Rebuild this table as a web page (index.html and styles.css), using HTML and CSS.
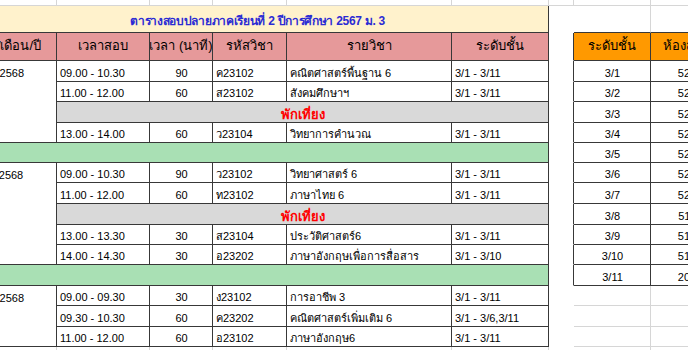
FILE: index.html
```html
<!DOCTYPE html>
<html lang="th">
<head>
<meta charset="utf-8">
<title>ตารางสอบปลายภาค</title>
<link rel="stylesheet" href="styles.css">
</head>
<body>
<div class="sheet">
  <!-- top strip -->
  <div class="c"></div><div class="c"></div><div class="c"></div><div class="c"></div><div class="c"></div><div class="c"></div><div class="c"></div><div class="c"></div><div class="c"></div>

  <!-- title -->
  <div class="c k title span6">ตารางสอบปลายภาคเรียนที่ 2 ปีการศึกษา 2567 ม. 3</div>
  <div class="c w"></div>
  <div class="c tt"></div>
  <div class="c tt"></div>

  <!-- header -->
  <div class="c k hd pink">วัน/เดือน/ปี</div>
  <div class="c k hd pink">เวลาสอบ</div>
  <div class="c k hd pink">เวลา (นาที)</div>
  <div class="c k hd pink">รหัสวิชา</div>
  <div class="c k hd pink">รายวิชา</div>
  <div class="c k hd pink">ระดับชั้น</div>
  <div class="c gl"></div>
  <div class="c k hd orange">ระดับชั้น</div>
  <div class="c k hd orange">ห้องสอบ</div>

  <!-- day 1 -->
  <div class="c k date r4"><span class="dt">10/03/2568</span></div>
  <div class="c k">09.00 - 10.30</div><div class="c k ctr">90</div><div class="c k">ค23102</div><div class="c k">คณิตศาสตร์พื้นฐาน 6</div><div class="c k">3/1 - 3/11</div>
  <div class="c gl"></div><div class="c k ctr">3/1</div><div class="c k ctr">521</div>

  <div class="c k">11.00 - 12.00</div><div class="c k ctr">60</div><div class="c k">ส23102</div><div class="c k">สังคมศึกษาฯ</div><div class="c k">3/1 - 3/11</div>
  <div class="c gl"></div><div class="c k ctr">3/2</div><div class="c k ctr">522</div>

  <div class="c k lunch span5">พักเที่ยง</div>
  <div class="c gl"></div><div class="c k ctr">3/3</div><div class="c k ctr">523</div>

  <div class="c k">13.00 - 14.00</div><div class="c k ctr">60</div><div class="c k">ว23104</div><div class="c k">วิทยาการคำนวณ</div><div class="c k">3/1 - 3/11</div>
  <div class="c gl"></div><div class="c k ctr">3/4</div><div class="c k ctr">524</div>

  <div class="c k green span6"></div>
  <div class="c gl"></div><div class="c k ctr">3/5</div><div class="c k ctr">525</div>

  <!-- day 2 -->
  <div class="c k date r5"><span class="dt">11/03/2568</span></div>
  <div class="c k">09.00 - 10.30</div><div class="c k ctr">90</div><div class="c k">ว23102</div><div class="c k">วิทยาศาสตร์ 6</div><div class="c k">3/1 - 3/11</div>
  <div class="c gl"></div><div class="c k ctr">3/6</div><div class="c k ctr">526</div>

  <div class="c k">11.00 - 12.00</div><div class="c k ctr">60</div><div class="c k">ท23102</div><div class="c k">ภาษาไทย 6</div><div class="c k">3/1 - 3/11</div>
  <div class="c gl"></div><div class="c k ctr">3/7</div><div class="c k ctr">527</div>

  <div class="c k lunch span5">พักเที่ยง</div>
  <div class="c gl"></div><div class="c k ctr">3/8</div><div class="c k ctr">511</div>

  <div class="c k">13.00 - 13.30</div><div class="c k ctr">30</div><div class="c k">ส23104</div><div class="c k">ประวัติศาสตร์6</div><div class="c k">3/1 - 3/11</div>
  <div class="c gl"></div><div class="c k ctr">3/9</div><div class="c k ctr">512</div>

  <div class="c k">14.00 - 14.30</div><div class="c k ctr">30</div><div class="c k">อ23202</div><div class="c k">ภาษาอังกฤษเพื่อการสื่อสาร</div><div class="c k">3/1 - 3/10</div>
  <div class="c gl"></div><div class="c k ctr">3/10</div><div class="c k ctr">513</div>

  <div class="c k green span6"></div>
  <div class="c gl"></div><div class="c k ctr">3/11</div><div class="c k ctr">201</div>

  <!-- day 3 -->
  <div class="c k date r3"><span class="dt">12/03/2568</span></div>
  <div class="c k">09.00 - 09.30</div><div class="c k ctr">30</div><div class="c k">ง23102</div><div class="c k">การอาชีพ 3</div><div class="c k">3/1 - 3/11</div>
  <div class="c w"></div><div class="c"></div><div class="c"></div>

  <div class="c k">09.30 - 10.30</div><div class="c k ctr">60</div><div class="c k">ค23202</div><div class="c k">คณิตศาสตร์เพิ่มเติม 6</div><div class="c k">3/1 - 3/6,3/11</div>
  <div class="c w"></div><div class="c"></div><div class="c"></div>

  <div class="c k">11.00 - 12.00</div><div class="c k ctr">60</div><div class="c k">อ23102</div><div class="c k">ภาษาอังกฤษ6</div><div class="c k">3/1 - 3/11</div>
  <div class="c w"></div><div class="c"></div><div class="c"></div>

  <!-- blank row -->
  <div class="c"></div><div class="c"></div><div class="c"></div><div class="c"></div><div class="c"></div><div class="c"></div><div class="c w"></div><div class="c"></div><div class="c"></div>
</div>
</body>
</html>
```

FILE: styles.css
```css
html, body {
  margin: 0;
  padding: 0;
  background: #ffffff;
  overflow: hidden;
}

.sheet {
  display: grid;
  grid-template-columns: 91px 93px 63px 74px 165px 97px 25px 77px 72px;
  grid-template-rows: 20px 27px 28px 21px 20px 21px 20px 20px 20px 21px 21px 20px 20px 21px 20px 21px 20px 20px;
  margin-left: -34px;
  margin-top: -14px;
  width: 757px;
  font-family: "Liberation Sans", "Noto Sans", sans-serif;
  font-size: 11px;
  color: #000;
}

.c {
  box-sizing: border-box;
  border-right: 1px solid #d6d6d6;
  border-bottom: 1px solid #d6d6d6;
  display: flex;
  align-items: flex-end;
  padding: 0 2px 1px 3px;
  white-space: nowrap;
  overflow: hidden;
  line-height: 14px;
  min-width: 0;
}

.k {
  border-right-color: #383838;
  border-bottom-color: #383838;
}

.w {
  border-right-color: transparent;
  border-bottom-color: transparent;
}

.gl {
  border-bottom-color: transparent;
  border-right-color: #383838;
}

.tt {
  border-bottom-color: #383838;
}

.ctr {
  justify-content: center;
}

.span6 { grid-column: span 6; }
.span5 { grid-column: span 5; }
.r3 { grid-row: span 3; }
.r4 { grid-row: span 4; }
.r5 { grid-row: span 5; }

.title {
  background: #fff2cc;
  color: #2b2bd4;
  font-weight: bold;
  font-size: 12px;
  letter-spacing: -0.3px;
  justify-content: center;
  align-items: center;
  padding-top: 4px;
}

.hd {
  justify-content: center;
  align-items: center;
  font-size: 13px;
  padding-left: 1px;
  padding-right: 1px;
}

.pink { background: #e6999a; }
.orange { background: #ff9900; }

.lunch {
  background: #d9d9d9;
  color: #ff0000;
  font-weight: bold;
  font-size: 13px;
  justify-content: center;
  padding-bottom: 0;
}

.green { background: #a9e0b4; }

.date {
  align-items: flex-start;
}

.dt {
  height: 20px;
  display: flex;
  align-items: flex-end;
  padding-bottom: 1px;
  box-sizing: border-box;
}
```
